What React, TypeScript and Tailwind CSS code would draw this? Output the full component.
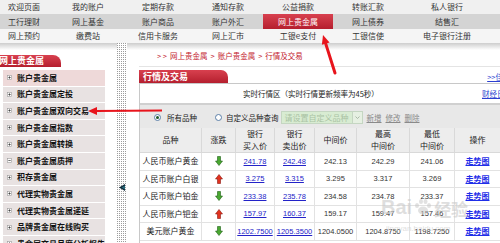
const navRows = [
  ["欢迎页面", "我的账户", "定期存款", "通知存款", "公益捐款", "转账汇款", "私人银行"],
  ["工行理财", "网上基金", "账户商品", "账户外汇", "网上贵金属", "网上债券", "结售汇"],
  ["网上预约", "缴费站", "信用卡服务", "网上汇市", "工银e支付", "工银信使", "电子银行注册"],
];

const rowBg = ["bg-[#f0f0f0] h-[14px]", "bg-[#d4d4d4] h-[15px]", "bg-[#f5f5f5] h-[14px]"];

const sideItems = [
  { label: "账户贵金属", minus: false, active: true },
  { label: "账户贵金属定投", minus: false },
  { label: "账户贵金属双向交易", minus: false },
  { label: "账户贵金属指数", minus: false },
  { label: "账户贵金属转换", minus: false },
  { label: "账户贵金属质押", minus: true },
  { label: "积存贵金属", minus: false },
  { label: "代理实物贵金属", minus: false },
  { label: "代理实物贵金属递延", minus: false },
  { label: "品牌贵金属在线购买", minus: false },
  { label: "贵金属交易月度分析报告", minus: false },
];

const quotes = [
  { name: "人民币账户黄金", up: false, buy: "241.78", sell: "242.48", mid: "242.13", high: "242.29", low: "241.06" },
  { name: "人民币账户白银", up: true, buy: "3.275", sell: "3.315", mid: "3.295", high: "3.317", low: "3.269" },
  { name: "人民币账户铂金", up: false, buy: "233.38", sell: "235.78", mid: "234.58", high: "234.78", low: "233.37" },
  { name: "人民币账户钯金", up: true, buy: "157.97", sell: "160.37", mid: "159.17", high: "159.47", low: "157.46" },
  { name: "美元账户黄金", up: false, buy: "1202.7500", sell: "1205.3500", mid: "1204.0500", high: "1204.8750", low: "1198.7250" },
];

function TopNav() {
  return (
    <div>
      {navRows.map((row, r) => (
        <div key={r} className={`grid grid-cols-[53px_70px_70px_70px_70px_70px_88px_1fr] ${rowBg[r]}`}>
          {row.map((label, c) => {
            const selected = r === 1 && c === 4;
            return (
              <div
                key={label}
                className={`flex items-center text-[8px] leading-none ${c === 0 ? "justify-start pl-[8px]" : "justify-center"} ${
                  selected ? "bg-gradient-to-b from-[#d8404f] to-[#b51e2e] text-white" : "text-[#333]"
                }`}
              >
                {label}
              </div>
            );
          })}
          <div />
        </div>
      ))}
    </div>
  );
}

function PlusBox({ minus }: { minus: boolean }) {
  return (
    <svg width="5" height="5" viewBox="0 0 5 5" className="shrink-0">
      <rect x="0.5" y="0.5" width="4" height="4" fill="#fff" stroke="#9a9a9a" strokeWidth="0.6" />
      <line x1="1.3" y1="2.5" x2="3.7" y2="2.5" stroke="#333" strokeWidth="0.7" />
      {!minus && <line x1="2.5" y1="1.3" x2="2.5" y2="3.7" stroke="#333" strokeWidth="0.7" />}
    </svg>
  );
}

function Sidebar() {
  return (
    <div className="w-[105px] shrink-0 pt-[12px]">
      <div className="h-[12px] w-[62px] rounded-tr-[8px] bg-gradient-to-b from-[#d8404f] to-[#b51e2e] text-white font-bold text-[9px] leading-[12px] -ml-[1px] whitespace-nowrap">
        网上贵金属
      </div>
      <div className="mt-[3px] pl-[3px]">
        {sideItems.map((item) => (
          <div
            key={item.label}
            className={`h-[16.6px] flex items-center gap-[5px] pl-[4px] border-b border-white whitespace-nowrap ${
              item.active ? "bg-[#eed9d9]" : "bg-[#e8e2e2]"
            }`}
          >
            <PlusBox minus={item.minus} />
            <span className="text-[8px] font-bold text-[#111] leading-none">{item.label}</span>
          </div>
        ))}
      </div>
    </div>
  );
}

function Splitter() {
  return (
    <div className="w-[10px] shrink-0 bg-[#9c9c9c] bg-[linear-gradient(90deg,transparent_50%,#fff_50%),linear-gradient(transparent_50%,#fff_50%)] bg-[length:2px_2px] pt-[141px] flex justify-center">
      <svg width="6" height="7" viewBox="0 0 6 7">
        <polygon points="6,0 6,7 0,3.5" fill="#0f2a3a" />
        <polygon points="6,1.5 6,5.5 2.5,3.5" fill="#2a6a7a" />
      </svg>
    </div>
  );
}

function TrendIcon({ up }: { up: boolean }) {
  return (
    <svg width="8" height="10" viewBox="0 0 8 10">
      {up ? (
        <polygon points="4,0.5 7.5,5 5.5,5 5.5,9.5 2.5,9.5 2.5,5 0.5,5" fill="#e2321f" stroke="#8a1a10" strokeWidth="0.6" />
      ) : (
        <polygon points="2.5,0.5 5.5,0.5 5.5,5 7.5,5 4,9.5 0.5,5 2.5,5" fill="#4aa832" stroke="#1f5f15" strokeWidth="0.6" />
      )}
    </svg>
  );
}

function Radio({ checked }: { checked: boolean }) {
  return (
    <span className="w-[7px] h-[7px] rounded-full border border-[#5b7fa8] bg-white flex items-center justify-center shrink-0">
      {checked && <span className="w-[3px] h-[3px] rounded-full bg-[#1f5a2a]" />}
    </span>
  );
}

function QuoteTable() {
  const head = "bg-[#ededed] border-b border-r border-[#d9d9d9] flex flex-col items-center justify-center leading-[12px] text-[#222]";
  const cell = "h-[17.5px] border-b border-r border-[#e2e2e2] flex items-center justify-center whitespace-nowrap";
  const num = "font-['Liberation_Sans',sans-serif] text-[7.5px]";
  return (
    <div className="grid grid-cols-[62px_34px_39px_40px_42px_53px_45px_46px] text-[8px]">
      <div className={`${head} h-[25px]`}>品种</div>
      <div className={head}>涨跌</div>
      <div className={head}><span>银行</span><span>买入价</span></div>
      <div className={head}><span>银行</span><span>卖出价</span></div>
      <div className={head}>中间价</div>
      <div className={head}><span>最高</span><span>中间价</span></div>
      <div className={head}><span>最低</span><span>中间价</span></div>
      <div className={head}>操作</div>
      {quotes.map((q) => (
        <div key={q.name} className="contents">
          <div className={`${cell} text-[#222]`}>{q.name}</div>
          <div className={cell}><TrendIcon up={q.up} /></div>
          <div className={`${cell} ${num} text-[#2323c8] underline`}>{q.buy}</div>
          <div className={`${cell} ${num} text-[#2323c8] underline`}>{q.sell}</div>
          <div className={`${cell} ${num} text-[#333]`}>{q.mid}</div>
          <div className={`${cell} ${num} text-[#333]`}>{q.high}</div>
          <div className={`${cell} ${num} text-[#333]`}>{q.low}</div>
          <div className={`${cell} text-[#1f2ee8] font-bold underline`}>走势图</div>
        </div>
      ))}
      <div className="h-[17.5px] col-span-8 border-r border-[#e2e2e2]" />
    </div>
  );
}

function Main() {
  return (
    <div className="w-[361px] shrink-0 overflow-hidden">
      <div className="h-[24px] flex items-end gap-[3px] pb-[5px] pl-[18px] border-b border-[#e4e4e4] text-[7.5px] leading-[10px] text-[#c3182c] whitespace-nowrap">
        <span>&gt; &gt;</span>
        <span>网上贵金属</span>
        <span>&gt;</span>
        <span>账户贵金属</span>
        <span>&gt;</span>
        <span>行情及交易</span>
      </div>
      <div className="mt-[3px] h-[14px] flex items-center border-b border-[#c8c8c8]">
        <div className="self-stretch w-[89px] rounded-tr-[7px] bg-gradient-to-b from-[#d8404f] to-[#b51e2e] text-white font-bold text-[9px] leading-[13px] pl-[4px] whitespace-nowrap">
          行情及交易
        </div>
        <div className="flex-1" />
        <span className="shrink-0 text-[7.5px] leading-none text-[#2b3fd0] underline -mr-[3px]">&gt;&gt;佳</span>
      </div>
      <div className="border-l border-[#c8c8c8]">
        <div className="h-[21px] flex items-center border-b-2 border-[#d0d0d0] whitespace-nowrap">
          <span className="pl-[103px] text-[7.5px] text-[#222]">实时行情区（实时行情更新频率为45秒）</span>
          <div className="flex-1" />
          <span className="shrink-0 text-[7.5px] text-[#2b3fd0] underline -mr-[12px]">财经日历</span>
        </div>
        <div className="h-[23px] flex items-center pt-[2px] pl-[14px] bg-[#e8e8e8] text-[7.5px] text-[#222] whitespace-nowrap">
          <Radio checked />
          <span className="ml-[6px]">所有品种</span>
          <span className="ml-[18px]"><Radio checked={false} /></span>
          <span className="ml-[4px]">自定义品种查询</span>
          <div className="ml-[2px] w-[82px] h-[13px] flex border border-[#c5d6c2] bg-[#d8ecd2]">
            <span className="flex-1 pl-[3px] text-[8px] leading-[11px] text-[#a9c2a3]">请设置自定义品种</span>
            <span className="w-[10px] border-l border-[#c5d6c2] bg-[#e6f0e2] flex items-center justify-center">
              <svg width="5" height="3" viewBox="0 0 5 3">
                <polyline points="0.5,0.5 2.5,2.5 4.5,0.5" fill="none" stroke="#9aaa98" strokeWidth="0.8" />
              </svg>
            </span>
          </div>
          <span className="ml-[4px] text-[#8a8a8a] underline">新增</span>
          <span className="ml-[4px] text-[#8a8a8a] underline">修改</span>
          <span className="ml-[4px] text-[#8a8a8a] underline">删除</span>
        </div>
        <QuoteTable />
      </div>
    </div>
  );
}

function Overlay() {
  return (
    <>
      <div className="absolute left-[381px] top-[197px] flex items-end gap-[2px] text-[#c9c9c9]/60 pointer-events-none">
        <span className="font-['Liberation_Sans',sans-serif] font-bold text-[20px] leading-none">Bai</span>
        <svg width="18" height="18" viewBox="0 0 18 18" className="mb-[1px]">
          <g fill="#c9c9c9" fillOpacity="0.55">
            <ellipse cx="9" cy="12.5" rx="5" ry="4" />
            <ellipse cx="3" cy="7.5" rx="2" ry="2.5" />
            <ellipse cx="7" cy="3.5" rx="2" ry="2.5" />
            <ellipse cx="11.5" cy="3.5" rx="2" ry="2.5" />
            <ellipse cx="15" cy="7.5" rx="2" ry="2.5" />
          </g>
        </svg>
        <span className="text-[17px] font-bold leading-none">经验</span>
      </div>
      <div className="absolute left-[386px] top-[223px] text-[8px] font-['Liberation_Sans',sans-serif] text-[#c9c9c9]/60 pointer-events-none">
        jingyan.baidu.com
      </div>
      <svg className="absolute inset-0 pointer-events-none" width="500" height="243" viewBox="0 0 500 243">
        <line x1="335" y1="73" x2="325.7" y2="43.6" stroke="#e8141c" strokeWidth="3" strokeLinecap="round" />
        <polygon points="323,35 329.6,42.4 321.9,44.8" fill="#e8141c" />
        <line x1="96" y1="111" x2="162" y2="110.5" stroke="#e8141c" strokeWidth="2" />
        <polygon points="88,111 97,107 97,115" fill="#e8141c" />
      </svg>
    </>
  );
}

export default function App() {
  return (
    <div className="relative w-[500px] h-[243px] overflow-hidden bg-white font-['Noto_Sans_CJK_SC',sans-serif] text-[#333]">
      <TopNav />
      <div className="flex h-[200px] bg-[linear-gradient(#cdcdcd,#ffffff_7px)]">
        <Sidebar />
        <div className="w-[12px] shrink-0" />
        <Splitter />
        <div className="w-[12px] shrink-0" />
        <Main />
      </div>
      <Overlay />
    </div>
  );
}
